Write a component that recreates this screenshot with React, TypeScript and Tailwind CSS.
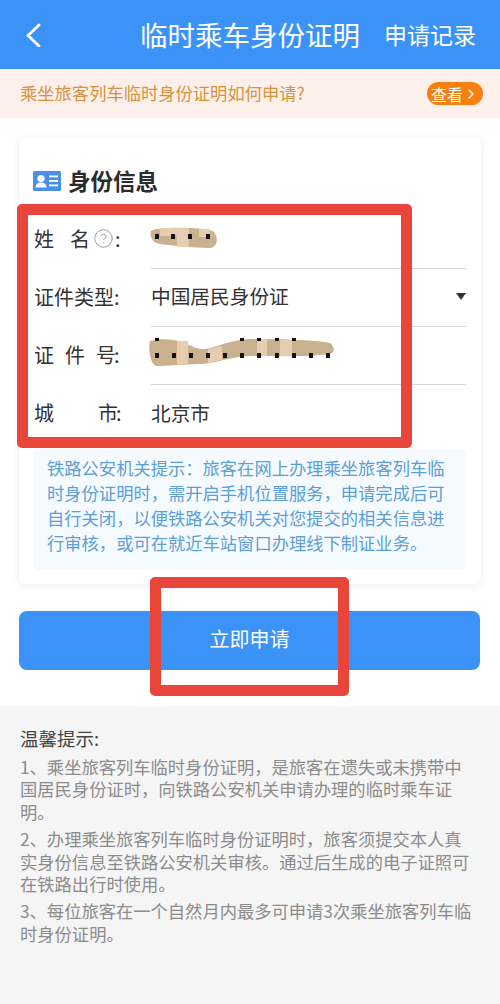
import { ChevronRight, CircleHelp } from "lucide-react";

const CJK = "font-['Noto_Sans_CJK_SC','Liberation_Sans',sans-serif]";

const TIP =
  "铁路公安机关提示\uFF1A旅客在网上办理乘坐旅客列车临时身份证明时\uFF0C需开启手机位置服务\uFF0C申请完成后可自行关闭\uFF0C以便铁路公安机关对您提交的相关信息进行审核\uFF0C或可在就近车站窗口办理线下制证业务。";

const NOTES = [
  "1、乘坐旅客列车临时身份证明\uFF0C是旅客在遗失或未携带中国居民身份证时\uFF0C向铁路公安机关申请办理的临时乘车证明。",
  "2、办理乘坐旅客列车临时身份证明时\uFF0C旅客须提交本人真实身份信息至铁路公安机关审核。通过后生成的电子证照可在铁路出行时使用。",
  "3、每位旅客在一个自然月内最多可申请3次乘坐旅客列车临时身份证明。",
];

function NameSmear() {
  return (
    <svg width="70" height="24" viewBox="0 0 70 24" className="-ml-[1px] block">
      <path d="M1 5 C6 0 60 1 64 6 C69 13 67 21 60 22 L36 21 L10 18 C3 17 -1 11 1 5Z" fill="#c9b08f" />
      <path d="M10 2 L27 2 L27 10 L10 10Z" fill="#e6ccb0" />
      <rect x="27" y="2" width="12" height="19" fill="#e6ccb0" />
      <rect x="49" y="3" width="11" height="8" fill="#e6ccb0" />
      <rect x="5" y="8" width="4" height="5" fill="#111" />
      <rect x="21" y="8" width="4" height="5" fill="#111" />
      <rect x="38" y="8" width="4" height="5" fill="#111" />
      <rect x="56" y="8" width="4" height="5" fill="#111" />
    </svg>
  );
}

function IdSmear() {
  const dots = [7, 24, 41, 58, 75, 92, 109, 127, 144, 161, 178];
  return (
    <svg width="190" height="32" viewBox="0 0 190 32" className="-ml-[3px] block">
      <path
        d="M2 3 C12 0 26 1 34 4 C44 8 50 12 58 11 C74 7 88 1 104 1 C130 1 170 2 182 5 C187 9 187 14 182 16 C160 19 130 18 104 18 C86 18 72 24 55 26 C40 26 20 28 8 28 C2 26 0 10 2 3Z"
        fill="#c9b08f"
      />
      <rect x="29" y="3" width="11" height="24" fill="#e6ccb0" />
      <path d="M60 11 L74 8 L74 22 L60 25Z" fill="#e6ccb0" />
      <rect x="109" y="1" width="10" height="17" fill="#e6ccb0" />
      <rect x="132" y="2" width="12" height="16" fill="#e6ccb0" />
      {dots.map((x) => (
        <rect key={x} x={x} y="15" width="4" height="5" fill="#111" />
      ))}
      {[7, 92, 109, 127, 144].map((x) => (
        <rect key={x} x={x} y="0" width="4" height="3" fill="#111" />
      ))}
    </svg>
  );
}

function Row({ label, children, line = true }: { label: React.ReactNode; children?: React.ReactNode; line?: boolean }) {
  return (
    <div className="flex h-[58px] items-stretch">
      <div className="flex w-[117px] shrink-0 items-center pb-[3px] text-[20px] text-[#333]">{label}</div>
      <div
        className={`flex flex-1 items-center pb-[3px] text-[19.7px] text-[#333] ${line ? "border-b border-[#d8d8d8]" : ""}`}
      >
        {children}
      </div>
    </div>
  );
}

export default function App() {
  return (
    <div lang="zh-CN" className={`${CJK} relative h-[1004px] w-[500px] overflow-hidden bg-white`}>
      <header className="flex h-[69px] items-center bg-[#3b93f7] text-white">
        <svg width="16" height="24" viewBox="0 0 16 24" fill="none" className="ml-[25px] shrink-0">
          <path d="M14 2 L3 12.5 L14 23" stroke="#fff" strokeWidth="2.8" strokeLinecap="round" strokeLinejoin="round" />
        </svg>
        <h1 className="ml-[99px] text-[27.5px] font-normal whitespace-nowrap">临时乘车身份证明</h1>
        <span className="ml-[24px] text-[23px] whitespace-nowrap">申请记录</span>
      </header>

      <div className="flex h-[49px] items-center justify-between bg-[#fdf0ea] pr-[17px] pl-[20px]">
        <span className="pb-[2px] text-[17.3px] text-[#d8923e]">乘坐旅客列车临时身份证明如何申请?</span>
        <span className="flex h-[23px] w-[56px] items-center justify-center rounded-full bg-[#f77f0f] text-[16px] text-white">
          查看
          <ChevronRight size={16} />
        </span>
      </div>

      <section className="mx-[19px] mt-[20px] h-[446px] rounded-[6px] bg-white px-[14px] pt-[27px] shadow-[0_1px_8px_rgba(0,0,0,0.08)]">
        <div className="flex h-[32px] items-center">
          <svg width="28" height="20" viewBox="0 0 28 20" className="shrink-0">
            <rect width="28" height="20" rx="1.5" fill="#4a90e8" />
            <circle cx="8" cy="7.5" r="3.6" fill="#fff" />
            <path d="M2.5 16.5c0-3.5 2.5-5 5.5-5s5.5 1.5 5.5 5z" fill="#fff" />
            <rect x="16" y="4.5" width="9" height="1.8" fill="#fff" />
            <rect x="16" y="9" width="9" height="1.8" fill="#fff" />
            <rect x="16" y="13.5" width="9" height="1.8" fill="#fff" />
          </svg>
          <h2 className="ml-[7px] text-[22.5px] font-bold text-[#2b2b2b]">身份信息</h2>
        </div>

        <div className="mt-[14px] w-[433px] pl-[1px]">
          <Row
            label={
              <>
                <span className="w-[36px]">姓</span>
                <span className="w-[23px]">名</span>
                <CircleHelp size={21} strokeWidth={1.1} className="text-[#9a9a9a]" />
                <span className="ml-[1px]">:</span>
              </>
            }
          >
            <NameSmear />
          </Row>
          <Row label="证件类型:">
            <span className="flex-1">中国居民身份证</span>
            <span className="h-0 w-0 border-x-[5.5px] border-t-[7px] border-x-transparent border-t-[#333]" />
          </Row>
          <Row
            label={
              <>
                <span className="w-[31px]">证</span>
                <span className="w-[31px]">件</span>
                <span className="w-[18px]">号</span>
                <span>:</span>
              </>
            }
          >
            <IdSmear />
          </Row>
          <Row
            label={
              <>
                <span className="w-[64px]">城</span>
                <span className="w-[18px]">市</span>
                <span>:</span>
              </>
            }
            line={false}
          >
            北京市
          </Row>
        </div>

        <p className="mt-[6px] w-[433px] rounded-[4px] bg-[#f5faff] pt-[6px] pr-[12px] pb-[15px] pl-[14px] text-[17.3px] leading-[25px] text-[#5b9fd6]">
          {TIP}
        </p>
      </section>

      <button className="mx-[19px] mt-[27px] flex h-[59px] w-[461px] items-center justify-center rounded-[8px] bg-[#3b93f7] pb-[4px] text-[20px] text-white">
        立即申请
      </button>

      <section className="mt-[36px] h-[298px] bg-[#f5f5f5] pt-[19px] pr-[22px] pl-[20px]">
        <h3 className="text-[18.5px] leading-[26px] font-normal text-[#444]">温馨提示:</h3>
        <ol className="mt-[5px] flex flex-col gap-[5px] text-[17.3px] leading-[22.4px] text-[#8c8c8c]">
          {NOTES.map((n) => (
            <li key={n}>{n}</li>
          ))}
        </ol>
      </section>

      <div className="absolute top-[204px] left-[17px] h-[244px] w-[395px] rounded-[5px] border-[11px] border-[#e8463a]" />
      <div className="absolute top-[577px] left-[150px] h-[119px] w-[199px] rounded-[5px] border-[11px] border-[#e8463a]" />
    </div>
  );
}
